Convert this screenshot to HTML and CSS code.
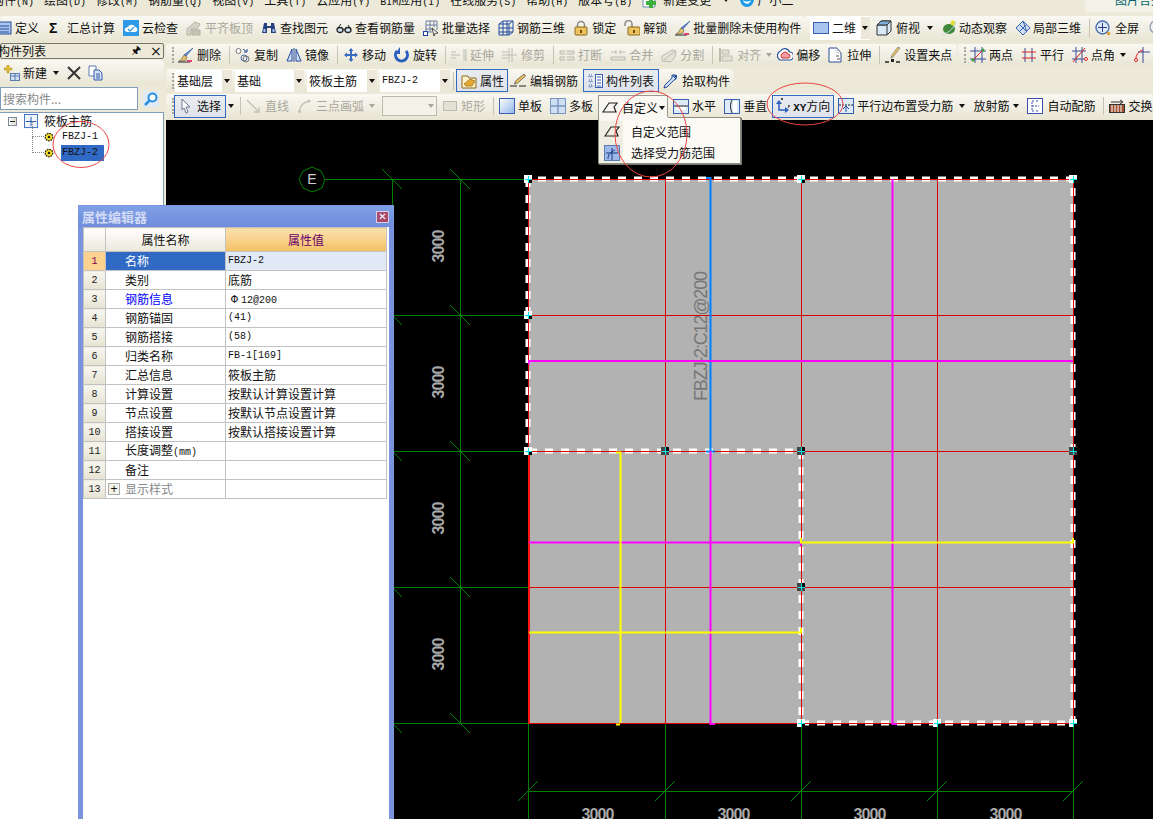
FILE: index.html
```html
<!DOCTYPE html>
<html lang="zh">
<head>
<meta charset="utf-8">
<title>属性编辑器</title>
<link rel="stylesheet" href="styles.css">
</head>
<body>
<svg class="defs" width="0" height="0">
  <symbol id="tbl" viewBox="0 0 16 16"><rect x="1" y="2" width="14" height="12" fill="#a9c4ee" stroke="#2a4f9a"/><path d="M4 6h9M4 9h9M4 12h9" stroke="#2a4f9a"/></symbol>
  <symbol id="chg" viewBox="0 0 16 16"><path d="M1 1h9l3 3v11H1z" fill="#fff" stroke="#6c8ab8"/><path d="M7 6h4v3h3v4h-3v3H7v-3H4V9h3z" fill="#3cae3c"/></symbol>
  <symbol id="fox" viewBox="0 0 16 16"><path d="M1 2c3 2 11 2 14 0 1 6-1 13-7 13S0 8 1 2z" fill="#1d9be8"/><path d="M4 8c2 2 6 2 8 0-1 5-7 5-8 0z" fill="#fff"/></symbol>
  <symbol id="cloud" viewBox="0 0 16 16"><rect width="16" height="16" fill="#2f9be8"/><path d="M2 11c-1-3 2-4 3-4 1-3 6-3 7 0 3 0 3 5 0 5H4z" fill="#fff"/><path d="M5 9l2 2 4-4" fill="none" stroke="#2f9be8" stroke-width="1.4"/></symbol>
  <symbol id="flat" viewBox="0 0 16 16"><path d="M1 9l8-7 5 2-3 5H5v6H1z" fill="#d6d4c8" stroke="#b5b3a6"/><path d="M6 10h8v5H6z" fill="#c5c3b5" stroke="#b5b3a6"/></symbol>
  <symbol id="binoc" viewBox="0 0 16 16"><path d="M3 3h3v3h4V3h3l2 10h-5V8H6v5H1z" fill="#27407f"/><path d="M2.500 9h2v3h-2zM11.500 9h2v3h-2z" fill="#a9c4ee"/></symbol>
  <symbol id="glasses" viewBox="0 0 16 16"><ellipse cx="4" cy="10" rx="3" ry="2.500" fill="#cfe0f3" stroke="#222" stroke-width="1.300"/><ellipse cx="12" cy="10" rx="3" ry="2.500" fill="#cfe0f3" stroke="#222" stroke-width="1.300"/><path d="M7 9.500h2M2 8l3-4M14 8l-2-3" stroke="#222" fill="none"/></symbol>
  <symbol id="batch" viewBox="0 0 16 16"><path d="M3 1h11v9M3 1v11h6M7 1v11M11 1v6M3 5h11M3 9h7" fill="none" stroke="#6c7f9f"/><rect x="0.500" y="11.500" width="4" height="4" fill="#fff" stroke="#1d3fb0"/><path d="M9 8l6 5-3 .5-1 2.500z" fill="#fff" stroke="#444"/></symbol>
  <symbol id="r3d" viewBox="0 0 16 16"><path d="M1 4l4-3h10v11l-4 3H1zM1 4h10v11M11 4l4-3M5 1v14M9 1v14M1 8h14M1 12h14" fill="none" stroke="#234aa0"/></symbol>
  <symbol id="lock" viewBox="0 0 16 16"><path d="M4.500 7V5a3.500 3.500 0 0 1 7 0v2" fill="none" stroke="#888" stroke-width="1.500"/><rect x="2" y="7" width="12" height="8" rx="1" fill="#eec25c" stroke="#8a6a20"/><path d="M7 10h2v3H7z" fill="#6a4a10"/></symbol>
  <symbol id="unlock" viewBox="0 0 16 16"><path d="M1 6V4a3.500 3.500 0 0 1 7 0v3" fill="none" stroke="#888" stroke-width="1.500"/><rect x="4" y="7" width="12" height="8" rx="1" fill="#eec25c" stroke="#8a6a20"/><path d="M9 10h2v3H9z" fill="#6a4a10"/></symbol>
  <symbol id="brush" viewBox="0 0 16 16"><path d="M15 1L8 9l-2-1z" fill="#5b86d8" stroke="#2a4f9a" stroke-width=".6"/><path d="M6 8l3 2-1 3c-2 1-5 1-7 1 2-1 3-3 5-6z" fill="#e8c06a" stroke="#555" stroke-width=".6"/><path d="M0 15h12" stroke="#222"/><path d="M9 13h5v2H9z" fill="#e04070"/></symbol>
  <symbol id="copy" viewBox="0 0 16 16"><circle cx="3.500" cy="4" r="2.500" fill="#fff" stroke="#777"/><circle cx="9" cy="11" r="3" fill="none" stroke="#4a6fb0"/><circle cx="11" cy="12" r="3" fill="none" stroke="#777"/><path d="M8 2l4 3m0-3v3H9" fill="none" stroke="#234aa0"/></symbol>
  <symbol id="mirror" viewBox="0 0 16 16"><path d="M6 2L1 14h5zM10 2l5 12h-5z" fill="#cfe0f3" stroke="#234aa0"/><path d="M8 1v14" stroke="#234aa0"/></symbol>
  <symbol id="move" viewBox="0 0 16 16"><path d="M8 1l2.500 3H9v3h3V5.500L15 8l-3 2.500V9H9v3h1.500L8 15l-2.500-3H7V9H4v1.500L1 8l3-2.500V7h3V4H5.500z" fill="#3a6cc0"/></symbol>
  <symbol id="rotate" viewBox="0 0 16 16"><path d="M3 4a6 6 0 1 0 9 0" fill="none" stroke="#2a5fc0" stroke-width="3"/><path d="M6 0v7H1z" fill="#2a5fc0"/></symbol>
  <symbol id="ext" viewBox="0 0 16 16"><path d="M0 8h9M13 2v12M15 2v12M0 5h5M0 11h5" fill="none" stroke="#bdbbae"/></symbol>
  <symbol id="trim" viewBox="0 0 16 16"><path d="M0 8h15M7 1v14M10 1v14M0 5h6M0 11h6" fill="none" stroke="#bdbbae"/></symbol>
  <symbol id="brk" viewBox="0 0 16 16"><path d="M1 4h14v3H1zM1 10h14v3H1z" fill="#e4e2d6" stroke="#bdbbae"/><path d="M7 2v13" stroke="#ece9d8" stroke-width="2"/></symbol>
  <symbol id="mrg" viewBox="0 0 16 16"><path d="M1 10h14v3H1z" fill="#e4e2d6" stroke="#bdbbae"/><path d="M1 5h5M10 5h5M6 3v4M10 3v4" stroke="#bdbbae" fill="none"/></symbol>
  <symbol id="spl" viewBox="0 0 16 16"><path d="M1 14V9l10-6 4 1-1 6-4 5z" fill="#e4e2d6" stroke="#bdbbae"/><path d="M3 13L14 4" stroke="#bdbbae"/></symbol>
  <symbol id="alg" viewBox="0 0 16 16"><path d="M2 1v14" stroke="#bdbbae" stroke-width="2"/><path d="M4 3h7v4H4zM4 9h10v5H4z" fill="#e4e2d6" stroke="#bdbbae"/></symbol>
  <symbol id="ofs" viewBox="0 0 16 16"><path d="M3 13a5 5 0 0 1 .5-9 5 5 0 0 1 9 1 4 4 0 0 1 0 8z" fill="#fff" stroke="#2a4f9a" stroke-width="1.200"/><path d="M5 11a3 3 0 0 1 1-5 3 3 0 0 1 5 1 2 2 0 0 1 0 4z" fill="#f0a0a0" stroke="#d03030"/></symbol>
  <symbol id="str" viewBox="0 0 16 16"><path d="M1 1h8l4 5v9H1z" fill="#fff" stroke="#2a4f9a"/><path d="M9 1v5h4" fill="none" stroke="#999" stroke-dasharray="1 1"/><path d="M8 9h3M9 12h3" stroke="#555"/></symbol>
  <symbol id="grip" viewBox="0 0 16 16"><path d="M15 1l-7 9-2 1 1-3 6-8z" fill="#eec25c" stroke="#777" stroke-width=".7"/><path d="M0 15h4" stroke="#222" stroke-width="1.500"/><rect x="6" y="12" width="3" height="3" fill="#222"/><path d="M11 15h4" stroke="#222" stroke-width="1.500"/></symbol>
  <symbol id="two" viewBox="0 0 16 16"><path d="M5 0v16M12 0v16M0 4h16M0 12h16" stroke="#3a4a9a" fill="none"/><path d="M2 14L14 2" stroke="#e02020"/><circle cx="3" cy="13" r="1.500" fill="#3c9a30"/><circle cx="13" cy="3" r="1.500" fill="#3c9a30"/></symbol>
  <symbol id="par" viewBox="0 0 16 16"><path d="M4 1v14M11 1v14" stroke="#3a4a9a"/><path d="M1 5h14M1 11h14" stroke="#e02020"/></symbol>
  <symbol id="ang" viewBox="0 0 16 16"><path d="M4 0v16M10 0v16M0 4h14M0 12h14" stroke="#3a4a9a" fill="none"/><path d="M1 15L13 1" stroke="#e02020"/><circle cx="14" cy="12" r="1.500" fill="#fff" stroke="#e02020"/></symbol>
  <symbol id="arc2" viewBox="0 0 16 16"><path d="M9 0v16M4 5h12" stroke="#3a4a9a" fill="none"/><path d="M2 13A9 9 0 0 1 9 3" fill="none" stroke="#e02020"/><circle cx="2" cy="13" r="1.500" fill="#fff" stroke="#e02020"/></symbol>
  <symbol id="twod" viewBox="0 0 16 16"><rect x=".5" y="2.500" width="15" height="11" fill="#a9c4ee" stroke="#3a5fb0"/></symbol>
  <symbol id="cube" viewBox="0 0 16 16"><path d="M1 5l4-4h10v10l-4 4H1z" fill="#d7e8f6" stroke="#333"/><path d="M1 5h10v10M11 5l4-4" fill="none" stroke="#333"/><path d="M1 5l4-4h10l-4 4z" fill="#7fb0dc" stroke="#333"/></symbol>
  <symbol id="orb" viewBox="0 0 16 16"><ellipse cx="8" cy="9" rx="6" ry="5" fill="#3f8a3a"/><circle cx="12" cy="3" r="2.500" fill="#e6dc40"/><path d="M1 15C5 14 13 9 15 2" stroke="#c8d8f0" fill="none"/></symbol>
  <symbol id="loc3" viewBox="0 0 16 16"><path d="M1 8l7-7 7 7-7 7z" fill="#cfe0f3" stroke="#3a5fb0"/><path d="M4.500 4.500l7 7M8 1l3.500 10M11.500 4.500l-7 7" stroke="#3a5fb0" fill="none"/></symbol>
  <symbol id="full" viewBox="0 0 16 16"><circle cx="7.500" cy="7.500" r="6.500" fill="#dfe8f6" stroke="#4a6fb0" stroke-width="1.400"/><path d="M7.500 3v9M3 7.500h9" stroke="#27407f"/><circle cx="13.500" cy="13.500" r="1.800" fill="#e0a030"/></symbol>
  <symbol id="mag" viewBox="0 0 16 16"><circle cx="9" cy="7" r="6" fill="#f2f2f2" stroke="#8a98b0" stroke-width="1.300"/></symbol>
  <symbol id="newi" viewBox="0 0 16 16"><path d="M3 0h2v3h3v2H5v3H3V5H0V3h3z" fill="#e8c030" stroke="#a08010" stroke-width=".5"/><rect x="6.500" y="8.500" width="9" height="7" fill="#cfe0f3" stroke="#5a7ab0"/><path d="M6.500 11h9M11 9v6" stroke="#5a7ab0"/></symbol>
  <symbol id="xmark" viewBox="0 0 16 16"><path d="M2 2l12 12M14 2L2 14" stroke="#333" stroke-width="2"/></symbol>
  <symbol id="clone" viewBox="0 0 16 16"><path d="M1 1h7v10H1z" fill="#fff" stroke="#5a7ab0"/><path d="M6 5h5l3 3v7H6z" fill="#cfe0f3" stroke="#3a5fb0"/><path d="M8 9h4M8 11h4M8 13h4" stroke="#3a5fb0"/></symbol>
  <symbol id="srch" viewBox="0 0 16 16"><rect width="16" height="16" fill="#dfeaf6"/><circle cx="9.500" cy="6.500" r="4" fill="#fff" stroke="#2a8fe0" stroke-width="2"/><path d="M6.500 9.500L2 14" stroke="#2a8fe0" stroke-width="2.500"/></symbol>
  <symbol id="tree" viewBox="0 0 16 16"><rect x=".5" y=".5" width="14" height="14" fill="#eef4fc" stroke="#3a6cc0"/><path d="M2 8h11M7.500 3v10" stroke="#2050b0"/></symbol>
  <symbol id="gear" viewBox="0 0 12 12"><circle cx="6" cy="6" r="4.500" fill="#f4e020" stroke="#222" stroke-width="1.500" stroke-dasharray="2 1"/><circle cx="6" cy="6" r="1.500" fill="#222"/></symbol>
  <symbol id="hand" viewBox="0 0 16 16"><path d="M1 3h6l1 2h7v10H1z" fill="#fff2c8" stroke="#8a6a20"/><path d="M3 11l6-5 5 2-3 5H5z" fill="#e8a830" stroke="#8a6a20" stroke-width=".7"/></symbol>
  <symbol id="pen" viewBox="0 0 16 16"><path d="M14 1l1.500 2-8 7-3 1 1-3z" fill="#eec25c" stroke="#555" stroke-width=".8"/><path d="M0 13h7M9 13h7" stroke="#222"/></symbol>
  <symbol id="list" viewBox="0 0 16 16"><path d="M1 2h3v2H1zM1 7h3v2H1zM1 12h3v2H1z" fill="none" stroke="#3a5fb0" stroke-dasharray="1 1"/><rect x="7.500" y="1.500" width="7" height="13" fill="#fff" stroke="#3a5fb0"/><path d="M9 4h4M9 7h4M9 10h4M9 13h4" stroke="#3a5fb0"/></symbol>
  <symbol id="drop" viewBox="0 0 16 16"><path d="M10 2l4 4-2 1-7 7-3 1 1-3 7-7z" fill="#cfe0f3" stroke="#2a4f9a"/><path d="M10 1l5 5 0-4z" fill="#2a4f9a"/></symbol>
  <symbol id="cur" viewBox="0 0 16 16"><path d="M1 1l8 8H5l2 5-2 1-2-5-2 2z" fill="#fff" stroke="#6a7590"/></symbol>
  <symbol id="lin" viewBox="0 0 16 16"><path d="M1 2l12 12M13 9v5H8" fill="none" stroke="#c3c1b4" stroke-width="1.300"/></symbol>
  <symbol id="arc" viewBox="0 0 16 16"><path d="M2 14C3 8 7 4 12 3" fill="none" stroke="#c3c1b4" stroke-width="1.300"/><circle cx="2.500" cy="13.500" r="1.500" fill="#c3c1b4"/><circle cx="12" cy="3" r="1.500" fill="#c3c1b4"/></symbol>
  <symbol id="rec" viewBox="0 0 16 16"><rect x="1.500" y="3.500" width="13" height="9" fill="#e4e2d6" stroke="#bdbbae"/></symbol>
  <symbol id="sgl" viewBox="0 0 16 16"><rect x=".5" y=".5" width="15" height="15" fill="url(#gb)" stroke="#3a5fb0"/></symbol>
  <symbol id="mul" viewBox="0 0 16 16"><rect x=".5" y=".5" width="15" height="15" fill="#cfe0f3" stroke="#7a94c0"/><path d="M8 1v14M1 8h14" stroke="#7a94c0" stroke-width="1.400"/></symbol>
  <symbol id="cst" viewBox="0 0 16 16"><path d="M1 12L7 3h8l-3 4 2 5z" fill="none" stroke="#222" stroke-width="1.200"/></symbol>
  <symbol id="csel" viewBox="0 0 16 16"><rect x=".5" y=".5" width="15" height="15" fill="#9db9ea" stroke="#5a7ab0"/><path d="M2 8h12M8 3v12M4 14c0-4 2-7 7-9" stroke="#143a80" fill="none"/></symbol>
  <symbol id="hor" viewBox="0 0 16 16"><rect x=".5" y="1.500" width="15" height="14" fill="#dfeaf8" stroke="#3a5fb0"/><path d="M1 8h14" stroke="#222"/><path d="M3 9h10v3H3z" fill="#fff"/></symbol>
  <symbol id="ver" viewBox="0 0 16 16"><rect x=".5" y="1.500" width="15" height="14" fill="#dfeaf8" stroke="#3a5fb0"/><path d="M8 2c-2 4-2 8 0 13" stroke="#222" fill="none"/><path d="M9 3h4v11H9z" fill="#fff"/></symbol>
  <symbol id="xy" viewBox="0 0 16 16"><path d="M4 3v9h8" fill="none" stroke="#2a5fc0" stroke-width="1.500"/><path d="M1 6l3-4 3 4zM10 9l4 3-4 3z" fill="#2a5fc0"/><path d="M6 0l2 2m0-2L6 2M13 7l1.500 1.500m0-1.500L13 10" stroke="#222" stroke-width=".8" fill="none"/></symbol>
  <symbol id="pedge" viewBox="0 0 16 16"><rect x=".5" y=".5" width="15" height="15" fill="#dfeaf8" stroke="#3a5fb0"/><path d="M1 7h14" stroke="#222" stroke-dasharray="2 1"/><path d="M8 8v6M5 11l3-3 3 3" stroke="#2a4f9a" fill="none"/></symbol>
  <symbol id="auto" viewBox="0 0 16 16"><rect x=".5" y=".5" width="15" height="15" fill="#fff" stroke="#3a4fb0"/><path d="M7 3H5v10h2M9 3h2M9 13h2M5 8h7" fill="none" stroke="#3a4fb0" stroke-dasharray="2 1"/></symbol>
  <symbol id="swap" viewBox="0 0 16 16"><rect x=".5" y="6.500" width="15" height="8" fill="#a05030" stroke="#333"/><path d="M3 7v7M6 7v7M9 7v7M12 7v7" stroke="#fff"/><path d="M2 4h11M11 2l3 2-3 2" stroke="#333" fill="none"/></symbol>
  <linearGradient id="gb" x1="0" y1="0" x2="1" y2="1"><stop offset="0" stop-color="#fff"/><stop offset="1" stop-color="#8fb4ea"/></linearGradient>
</svg>

<div class="menubar">
  <div class="menus">
    <span>构件<span class="m">(N)</span></span><span>绘图<span class="m">(D)</span></span><span>修改<span class="m">(M)</span></span><span>钢筋量<span class="m">(Q)</span></span><span>视图<span class="m">(V)</span></span><span>工具<span class="m">(T)</span></span><span>云应用<span class="m">(Y)</span></span><span><span class="m">BIM</span>应用<span class="m">(I)</span></span><span>在线服务<span class="m">(S)</span></span><span>帮助<span class="m">(H)</span></span><span>版本号<span class="m">(B)</span></span>
    <span class="menu-ico"><svg class="i"><use href="#chg"/></svg>新建变更<i class="arrow dark"></i></span>
    <span class="menu-ico fox"><svg class="i"><use href="#fox"/></svg>广小二</span>
  </div>
  <div class="menu-right">图片合并</div>
</div>

<div class="row">
  <div class="band tb1">
    <div class="btn first"><svg class="i"><use href="#tbl"/></svg>定义</div>
    <div class="btn"><b class="sigma">Σ</b>汇总计算</div>
    <div class="btn"><svg class="i"><use href="#cloud"/></svg>云检查</div>
    <div class="btn off"><svg class="i"><use href="#flat"/></svg>平齐板顶</div>
    <div class="btn"><svg class="i"><use href="#binoc"/></svg>查找图元</div>
    <div class="btn"><svg class="i"><use href="#glasses"/></svg>查看钢筋量</div>
    <div class="btn"><svg class="i"><use href="#batch"/></svg>批量选择</div>
    <div class="btn"><svg class="i"><use href="#r3d"/></svg>钢筋三维</div>
    <div class="btn"><svg class="i"><use href="#lock"/></svg>锁定</div>
    <div class="btn"><svg class="i"><use href="#unlock"/></svg>解锁</div>
    <div class="btn tight"><svg class="i"><use href="#brush"/></svg>批量删除未使用构件</div>
  </div>
  <div class="band tb1b">
    <div class="combo2"><svg class="i"><use href="#twod"/></svg><span class="c2t">二维</span><i class="dd"><i class="arrow dark"></i></i></div>
    <div class="btn wide"><svg class="i"><use href="#cube"/></svg>俯视<i class="arrow dark sp4"></i></div>
    <div class="btn tight"><svg class="i"><use href="#orb"/></svg>动态观察</div>
    <div class="btn tight"><svg class="i"><use href="#loc3"/></svg>局部三维</div>
    <i class="sep"></i>
    <div class="btn wide"><svg class="i"><use href="#full"/></svg>全屏</div>
    <div class="btn"><svg class="i"><use href="#mag"/></svg></div>
  </div>
</div>

<div class="main">
  <aside class="panel">
    <div class="ptitle"><span class="pname">构件列表</span><span class="pin">🖈</span><span class="pclose">×</span></div>
    <div class="ptools">
      <svg class="i"><use href="#newi"/></svg><span class="newt">新建</span><i class="arrow dark"></i>
      <svg class="i xbtn"><use href="#xmark"/></svg>
      <svg class="i"><use href="#clone"/></svg>
    </div>
    <div class="psearch"><div class="sinput">搜索构件...</div><svg class="i"><use href="#srch"/></svg></div>
    <div class="ptree">
      <div class="troot"><i class="minus"></i><svg class="i"><use href="#tree"/></svg><span>筱板主筋</span></div>
      <div class="titem"><i class="dots"></i><svg class="g"><use href="#gear"/></svg><span class="tname">FBZJ-1</span></div>
      <div class="titem"><i class="dots"></i><svg class="g"><use href="#gear"/></svg><span class="tname sel">FBZJ-2</span></div>
    </div>
  </aside>

  <div class="work">
    <div class="row row2">
      <div class="band tb2">
        <i class="grip"></i>
        <div class="btn"><svg class="i"><use href="#brush"/></svg>删除</div><i class="sep"></i>
        <div class="btn"><svg class="i"><use href="#copy"/></svg>复制</div>
        <div class="btn"><svg class="i"><use href="#mirror"/></svg>镜像</div><i class="sep"></i>
        <div class="btn"><svg class="i"><use href="#move"/></svg>移动</div>
        <div class="btn"><svg class="i"><use href="#rotate"/></svg>旋转</div><i class="sep"></i>
        <div class="btn off"><svg class="i"><use href="#ext"/></svg>延伸</div>
        <div class="btn off"><svg class="i"><use href="#trim"/></svg>修剪</div><i class="sep"></i>
        <div class="btn off"><svg class="i"><use href="#brk"/></svg>打断</div>
        <div class="btn off"><svg class="i"><use href="#mrg"/></svg>合并</div>
        <div class="btn off"><svg class="i"><use href="#spl"/></svg>分割</div><i class="sep"></i>
        <div class="btn off"><svg class="i"><use href="#alg"/></svg>对齐<i class="arrow gray sp a2"></i></div>
        <div class="btn"><svg class="i"><use href="#ofs"/></svg>偏移</div>
        <div class="btn"><svg class="i"><use href="#str"/></svg>拉伸</div><i class="sep"></i>
        <div class="btn"><svg class="i"><use href="#grip"/></svg>设置夹点</div>
      </div>
      <div class="band tb2b">
        <i class="grip"></i>
        <div class="btn"><svg class="i"><use href="#two"/></svg>两点</div>
        <div class="btn"><svg class="i"><use href="#par"/></svg>平行</div>
        <div class="btn"><svg class="i"><use href="#ang"/></svg>点角<i class="arrow dark sp"></i></div>
        <div class="btn"><svg class="i"><use href="#arc2"/></svg></div>
      </div>
    </div>

    <div class="row row3">
      <div class="band tb3">
        <i class="grip"></i>
        <div class="combo w57"><span>基础层</span><i class="dd"><i class="arrow dark"></i></i></div>
        <div class="combo w69"><span>基础</span><i class="dd"><i class="arrow dark"></i></i></div>
        <div class="combo w70"><span>筱板主筋</span><i class="dd"><i class="arrow dark"></i></i></div>
        <div class="combo w70"><span class="m">FBZJ-2</span><i class="dd"><i class="arrow dark"></i></i></div>
        <i class="sep s3"></i>
        <div class="btn on"><svg class="i"><use href="#hand"/></svg>属性</div>
        <div class="btn plain p1"><svg class="i"><use href="#pen"/></svg>编辑钢筋</div>
        <div class="btn on list-btn"><svg class="i"><use href="#list"/></svg>构件列表</div>
        <div class="btn plain"><svg class="i"><use href="#drop"/></svg>拾取构件</div>
      </div>
    </div>

    <div class="row row4">
      <div class="band tb4">
        <i class="grip"></i>
        <div class="btn on sel-btn"><svg class="i"><use href="#cur"/></svg>选择</div><i class="arrow dark a1"></i><i class="sep"></i>
        <div class="btn off"><svg class="i"><use href="#lin"/></svg>直线</div>
        <div class="btn off"><svg class="i"><use href="#arc"/></svg>三点画弧<i class="arrow gray sp"></i></div>
        <div class="combo w55 dis"><span></span><i class="dd"><i class="arrow gray"></i></i></div>
        <div class="btn off"><svg class="i"><use href="#rec"/></svg>矩形</div><i class="sep"></i>
        <div class="btn"><svg class="i"><use href="#sgl"/></svg>单板</div>
        <div class="btn"><svg class="i"><use href="#mul"/></svg>多板</div>
        <div class="btn open"><svg class="i"><use href="#cst"/></svg>自定义<i class="arrow dark sp2"></i></div>
        <div class="btn"><svg class="i"><use href="#hor"/></svg>水平</div>
        <div class="btn"><svg class="i"><use href="#ver"/></svg>垂直</div>
        <div class="btn on xy"><svg class="i"><use href="#xy"/></svg><span><span class="m">XY</span>方向</span></div>
        <div class="btn"><svg class="i"><use href="#pedge"/></svg>平行边布置受力筋<i class="arrow dark sp5"></i></div>
        <div class="btn">放射筋<i class="arrow dark sp3"></i></div>
        <div class="btn wide"><svg class="i"><use href="#auto"/></svg>自动配筋</div><i class="sep"></i>
        <div class="btn"><svg class="i"><use href="#swap"/></svg>交换左右</div>
      </div>
    </div>

    <div class="canvas">
      <svg class="draw" viewBox="166 120 987 699" width="987" height="699">
        <defs>
          <g id="hw"><rect width="8" height="8" fill="#fff"/><rect x="4" y="4" width="4" height="4" fill="#000"/><path d="M4.500 1v7M1 4.500h7" stroke="#00e8e8"/></g>
          <g id="hd"><rect width="8" height="8" fill="#444"/><rect x="4" width="4" height="4" fill="#000"/><path d="M4.500 0v8M0 4.500h8" stroke="#00e8e8"/></g>
        </defs>
        <g class="grn">
          <path d="M325 179.500H528M392.500 179V819M460.500 179V723M392 315.500H528M392 451.500H528M392 587.500H528M392 723.500H528M528.500 723V819M665.500 723V819M801.500 723V819M937.500 723V819M1073.500 723V819M528 791.500H1074"/>
          <path d="M382 169l20 20M450 169l20 20M450 305l20 20M450 441l20 20M450 577l20 20M450 713l20 20M382 305l20 20M382 441l20 20M382 577l20 20M382 713l20 20"/>
          <path d="M518 801l20-20M655 801l20-20M791 801l20-20M927 801l20-20M1063 801l20-20"/>
          <polygon points="312,167 321,171 325,179 322,188 312,192 303,188 299,179 303,171"/>
        </g>
        <text class="axis" x="312" y="184">E</text>
        <rect class="slab" x="528" y="179" width="545" height="544"/>
        <text class="mark" transform="translate(707 336) rotate(-90)" textLength="130">FBZJ-2:C12@200</text>
        <g class="dim">
          <text transform="translate(444 246) rotate(-90)" textLength="33">3000</text>
          <text transform="translate(444 382) rotate(-90)" textLength="33">3000</text>
          <text transform="translate(444 518) rotate(-90)" textLength="33">3000</text>
          <text transform="translate(444 654) rotate(-90)" textLength="33">3000</text>
          <text x="598" y="820" textLength="33">3000</text>
          <text x="734" y="820" textLength="33">3000</text>
          <text x="870" y="820" textLength="33">3000</text>
          <text x="1006" y="820" textLength="33">3000</text>
        </g>
        <g class="dash">
          <path d="M528 179H1073" stroke-dashoffset="6"/>
          <path d="M528 179V451"/>
          <path d="M528 451H801" stroke-dashoffset="15"/>
          <path d="M801 451V723"/>
          <path d="M801 723H1073"/>
          <path d="M1073 179V723" stroke-dashoffset="7"/>
        </g>
        <path class="red" d="M528 179.500H1074M528 315.500H1074M528 451.500H1074M528 587.500H1074M528 723.500H1074M528.500 179V724M665.500 179V724M801.500 179V724M937.500 179V724M1073.500 179V724"/>
        <path class="red2" d="M529 451V724"/>
        <path class="bar blu" d="M706 178H710.500V451M706 451.500H715"/>
        <path class="bar mag" d="M529 364.500V361H1073M710.500 451V724H715M892.500 179V724H897M529 542.500H801V546"/>
        <path class="bar yel" d="M616 452.500H620.500V723M616 724.500H620M529 632.500H801V628M801 538V542.500H1073V538"/>
        <use href="#hw" x="524" y="175"/><use href="#hw" x="797" y="175"/><use href="#hw" x="1069" y="175"/>
        <use href="#hw" x="524" y="311"/><use href="#hw" x="524" y="447"/>
        <use href="#hd" x="661" y="447"/><use href="#hd" x="797" y="447"/><use href="#hd" x="1069" y="447"/>
        <use href="#hd" x="797" y="583"/><use href="#hw" x="797" y="719"/><use href="#hw" x="933" y="719"/><use href="#hw" x="1069" y="719"/>
      </svg>
    </div>
  </div>
</div>

<div class="dialog">
  <div class="dtitle"><span>属性编辑器</span><i class="dclose">✕</i></div>
  <table class="props">
    <thead><tr class="hd"><th class="idx"></th><th>属性名称</th><th class="hv">属性值</th></tr></thead>
    <tbody>
      <tr class="cur"><td class="idx">1</td><td class="nm">名称</td><td class="val m">FBZJ-2</td></tr>
      <tr><td class="idx">2</td><td class="nm">类别</td><td class="val">底筋</td></tr>
      <tr><td class="idx">3</td><td class="nm req">钢筋信息</td><td class="val"><span class="phi">Φ</span><span class="m">12@200</span></td></tr>
      <tr><td class="idx">4</td><td class="nm">钢筋锚固</td><td class="val m">(41)</td></tr>
      <tr><td class="idx">5</td><td class="nm">钢筋搭接</td><td class="val m">(58)</td></tr>
      <tr><td class="idx">6</td><td class="nm">归类名称</td><td class="val m">FB-1[169]</td></tr>
      <tr><td class="idx">7</td><td class="nm">汇总信息</td><td class="val">筱板主筋</td></tr>
      <tr><td class="idx">8</td><td class="nm">计算设置</td><td class="val">按默认计算设置计算</td></tr>
      <tr><td class="idx">9</td><td class="nm">节点设置</td><td class="val">按默认节点设置计算</td></tr>
      <tr><td class="idx">10</td><td class="nm">搭接设置</td><td class="val">按默认搭接设置计算</td></tr>
      <tr><td class="idx">11</td><td class="nm">长度调整<span class="m">(mm)</span></td><td class="val"></td></tr>
      <tr><td class="idx">12</td><td class="nm">备注</td><td class="val"></td></tr>
      <tr><td class="idx">13</td><td class="nm gr"><i class="plus">+</i>显示样式</td><td class="val"></td></tr>
    </tbody>
  </table>
</div>

<div class="menu">
  <div class="mi"><svg class="i"><use href="#cst"/></svg><span>自定义范围</span></div>
  <div class="mi"><svg class="i"><use href="#csel"/></svg><span>选择受力筋范围</span></div>
</div>

<svg class="notes" width="1153" height="819">
  <ellipse cx="81" cy="144.500" rx="28" ry="23"/>
  <ellipse cx="651" cy="134" rx="36" ry="43"/>
  <ellipse cx="805" cy="104" rx="38" ry="21"/>
</svg>
</body>
</html>
```

FILE: styles.css
```css
* { box-sizing: border-box; }
html, body { margin: 0; padding: 0; }
body {
  width: 1153px; height: 819px; overflow: hidden; position: relative;
  background: #ece9d8; color: #111;
  font: 12px/16px "Noto Sans CJK SC", "Liberation Sans", sans-serif;
}
i { font-style: normal; display: block; }
.defs { position: absolute; }
.m { font: 10px/14px "Liberation Mono", "DejaVu Sans Mono", monospace; }
.i { width: 16px; height: 16px; flex: none; overflow: visible; }

.menubar { height: 16px; overflow: hidden; display: flex; justify-content: space-between; }
.menus { display: flex; gap: 10px; margin: -8px 0 0 -8px; white-space: nowrap; height: 16px; }
.menu-ico { display: flex; align-items: center; gap: 5px; }
.menu-ico .arrow { margin-left: 7px; }
.fox { gap: 2px; }
.menu-right { width: 68px; height: 12px; background: #f3f2e8; color: #00656b; padding-left: 30px; line-height: 0; white-space: nowrap; overflow: hidden; }

.row { display: flex; white-space: nowrap; height: 26px; }
.row2 { gap: 1px; }
.band {
  display: flex; align-items: center; gap: 8px; height: 100%;
  background: linear-gradient(#f9f8f2, #e8e5d3); border-radius: 3px; overflow: hidden;
}
.tb1 { width: 804px; padding-bottom: 2px; }
.tb1b { flex: 1; padding: 0 0 2px 6px; }
.tb2 { width: 791px; height: 22px; margin-top: 2px; padding-left: 6px; }
.tb2b { flex: 1; height: 22px; margin-top: 2px; padding-left: 6px; }
.tb3 { width: 567px; height: 23px; margin-top: 1px; padding-left: 6px; gap: 3px; }
.tb4 { flex: 1; margin: 0; padding: 0 0 2px 6px; }

.btn { display: flex; align-items: center; gap: 3px; height: 22px; flex: none; }
.btn.first { margin-left: -4px; }
.btn.tight { gap: 2px; }
.btn.wide { gap: 4px; }
.off { color: #a9a79b; }
.sigma { width: 10px; font: bold 14px "Liberation Sans", sans-serif; margin: 0 5px 0 2px; }
.grip { width: 3px; height: 16px; flex: none; border-left: 2px dotted #a8a698; margin-right: -5px; }
.tb3 .grip { margin-right: -3px; }
.tb4 .grip { margin-right: -9px; }
.sep { width: 1px; height: 18px; flex: none; background: #c6c3b1; margin: 0 -3px 0 0; }
.s3 { margin: 0 -1px 0 0; }
.arrow { width: 0; height: 0; flex: none; border: 3px solid transparent; border-top: 4px solid #fff; border-bottom: 0; }
.arrow.dark { border-top-color: #111; }
.arrow.gray { border-top-color: #a9a79b; }
.sp { margin-left: 2px; }
.a2 { margin-right: -3px; }
.sp2 { margin-left: -3px; }
.sp3 { margin-left: 1px; }
.sp4 { margin-left: 3px; }
.sp5 { margin-left: 3px; }
.a1 { margin: 0 -2px 0 -6px; }

.combo { display: flex; align-items: center; justify-content: space-between; height: 22px; background: #fff; padding-left: 2px; flex: none; }
.dd { display: flex; align-items: center; justify-content: center; width: 10px; height: 22px; background: #ebe8da; }
.w57 { width: 57px; } .w69 { width: 69px; } .w70 { width: 70px; }
.w55 { width: 55px; margin: 0 -3px 0 -1px; }
.combo.dis { background: #f4f2e8; border: 1px solid #bdbbae; height: 20px; }
.combo.dis .dd { height: 18px; background: none; }
.combo2 { display: flex; align-items: center; width: 60px; height: 24px; margin-right: -2px; background: #fff; padding-left: 3px; gap: 3px; }
.c2t { width: 28px; }

.btn.on { height: 23px; padding: 0 3px 0 4px; background: linear-gradient(#e9ebef, #dfe3ea); border: 1px solid #316ac5; }
.plain { gap: 4px; }
.btn.plain { gap: 4px; }
.p1 { margin-left: -1px; }
.btn.on.list-btn { margin-left: 2px; gap: 2px; padding-right: 4px; }
.btn.on.sel-btn { gap: 0; padding: 0 4px 0 6px; }
.open { background: #f8f7f1; border: 1px solid #9a9888; border-bottom: 0; height: 25px; padding: 0 2px 0 3px; margin: 1px -3px 0; gap: 4px; align-self: flex-start; }
.btn.on.xy { margin: 0 -4px 0 -3px; padding: 0 3px 0 2px; gap: 2px; }
.xy .m { font-size: 11px; font-weight: 700; }

.main { display: grid; grid-template-columns: 166px 1fr; height: 777px; }
.panel { display: flex; flex-direction: column; width: 164px; overflow: hidden; }
.ptitle { height: 16px; margin-top: 1px; display: flex; align-items: center; border: 1px solid #77766a; border-radius: 2px; background: #ece9d8; white-space: nowrap; padding-right: 3px; }
.pname { flex: 1; margin-left: -3px; }
.pin { font: 11px "DejaVu Sans", sans-serif; margin-right: 9px; }
.pclose { font: 14px "DejaVu Sans", sans-serif; width: 10px; }
.ptools { height: 26px; margin-top: 1px; display: flex; align-items: center; padding-left: 4px; background: linear-gradient(#f9f8f2, #e8e5d3); border-radius: 3px; }
.newt { margin: 0 6px 0 3px; }
.xbtn { margin: 0 6px 0 7px; }
.psearch { height: 25px; display: flex; align-items: center; gap: 5px; }
.sinput { width: 138px; height: 23px; border: 1px solid #7f9db9; background: #fff; color: #8a8a8a; line-height: 21px; padding-left: 2px; }
.ptree { flex: 1; background: #fff; border-top: 1px solid #7f9db9; border-right: 1px solid #7f9db9; margin-top: 1px; }
.troot { display: flex; align-items: center; height: 16px; padding-left: 8px; }
.troot .i { width: 15px; height: 15px; margin: 0 5px 0 7px; }
.minus { width: 9px; height: 9px; border: 1px solid #7f8a9c; background: linear-gradient(90deg, #fff, #dcdcd0); }
.minus::after { content: ""; display: block; margin: 3px 1px; height: 1px; background: #222; }
.titem { display: flex; align-items: center; height: 16px; padding-left: 32px; }
.dots { width: 12px; height: 16px; border-left: 1px dotted #888; border-bottom: 1px dotted #888; transform: translateY(-8px); }
.g { width: 10px; height: 10px; flex: none; }
.tname { font: 10px/16px "Liberation Mono", monospace; padding-left: 1px; margin-left: 7px; height: 16px; width: 43px; }
.tname.sel { background: #316ac5; }

.work { display: flex; flex-direction: column; min-width: 0; }
.canvas { flex: 1; background: #000; overflow: hidden; }
.draw { display: block; }
.grn path { fill: none; stroke: #008000; stroke-width: 1; }
.grn polygon { fill: none; stroke: #008000; }
.axis { fill: #cfcfcf; font: 14px "Liberation Sans", sans-serif; text-anchor: middle; }
.slab { fill: #b2b2b2; }
.mark { fill: #767676; font: 18px "Liberation Sans", sans-serif; text-anchor: middle; }
.dim text { fill: #aaa; font: 700 16px "Liberation Sans", sans-serif; text-anchor: middle; }
.dash path { fill: none; stroke: #fff; stroke-width: 5; stroke-dasharray: 8 8; }
.red { fill: none; stroke: #dd0000; stroke-width: 1; }
.red2 { fill: none; stroke: #ff1515; stroke-width: 2; }
.bar { fill: none; stroke-width: 2; }
.blu { stroke: #0080ff; }
.mag { stroke: #ff00ff; }
.yel { stroke: #ffff00; }

.dialog { position: absolute; left: 78px; top: 205px; bottom: 0; width: 316px; background: #fff; border: solid #7a93dc; border-width: 1px 5px 0 5px; }
.dtitle { height: 21px; margin: 0 -5px; padding: 0 5px 0 4px; display: flex; align-items: center; justify-content: space-between; background: linear-gradient(#7f9fe6, #6f8ddc); color: #d3dcf4; font-weight: 700; font-size: 13px; }
.dclose { width: 13px; height: 12px; background: #a84a6c; border: 1px solid #d8cfe8; color: #fff; font: bold 10px/10px "DejaVu Sans", sans-serif; text-align: center; }
.props { width: 304px; margin-top: 0; border-collapse: collapse; table-layout: fixed; font-size: 12px; line-height: 16px; }
.props th, .props td { border: 1px solid #c2c2c2; padding: 0; height: 19px; overflow: hidden; white-space: nowrap; }
.props .hd th { height: 24px; font-weight: 400; background: linear-gradient(#fff, #ebe8da); }
.props th.idx { width: 22px; }
.props th:nth-child(2) { width: 120px; }
.props th.hv { background: linear-gradient(#fce1b0, #f4c064); color: #6a006a; }
.props td.idx { text-align: center; font: 10px "Liberation Mono", monospace; background: linear-gradient(#f8f7f0, #e6e3d2); color: #222; }
.props .nm { padding-left: 19px; }
.props .val { padding-left: 2px; }
.phi { display: inline-block; width: 13px; text-align: center; font-family: "DejaVu Sans", sans-serif; font-size: 10px; }
.props .cur td.idx { background: #fdd28f; color: #7a0050; }
.cur .nm { background: #316ac5; color: #fff; }
.cur .val { background: #e0e9f5; }
.req { color: #0000ff; }
.gr { color: #888; position: relative; }
.plus { position: absolute; left: 2px; top: 3px; width: 12px; height: 12px; border: 1px solid #aaa; background: #f4f3ea; color: #111; font: 12px/10px "Liberation Sans", sans-serif; text-align: center; }

.menu { position: absolute; left: 598px; top: 117px; width: 143px; height: 47px; padding-top: 3px; background: linear-gradient(90deg, #f0eee2 24px, #fbfaf5 24px); border: 1px solid #8e8c7c; box-shadow: 1px 1px 0 #777; }
.menu::before { content: ""; position: absolute; left: 0; top: -1px; width: 69px; height: 4px; background: #f8f7f1; }
.mi { display: flex; align-items: center; height: 21px; padding-left: 5px; gap: 11px; }

.notes { position: absolute; left: 0; top: 0; pointer-events: none; }
.notes ellipse { fill: none; stroke: #ee4444; stroke-width: 1; }
```
